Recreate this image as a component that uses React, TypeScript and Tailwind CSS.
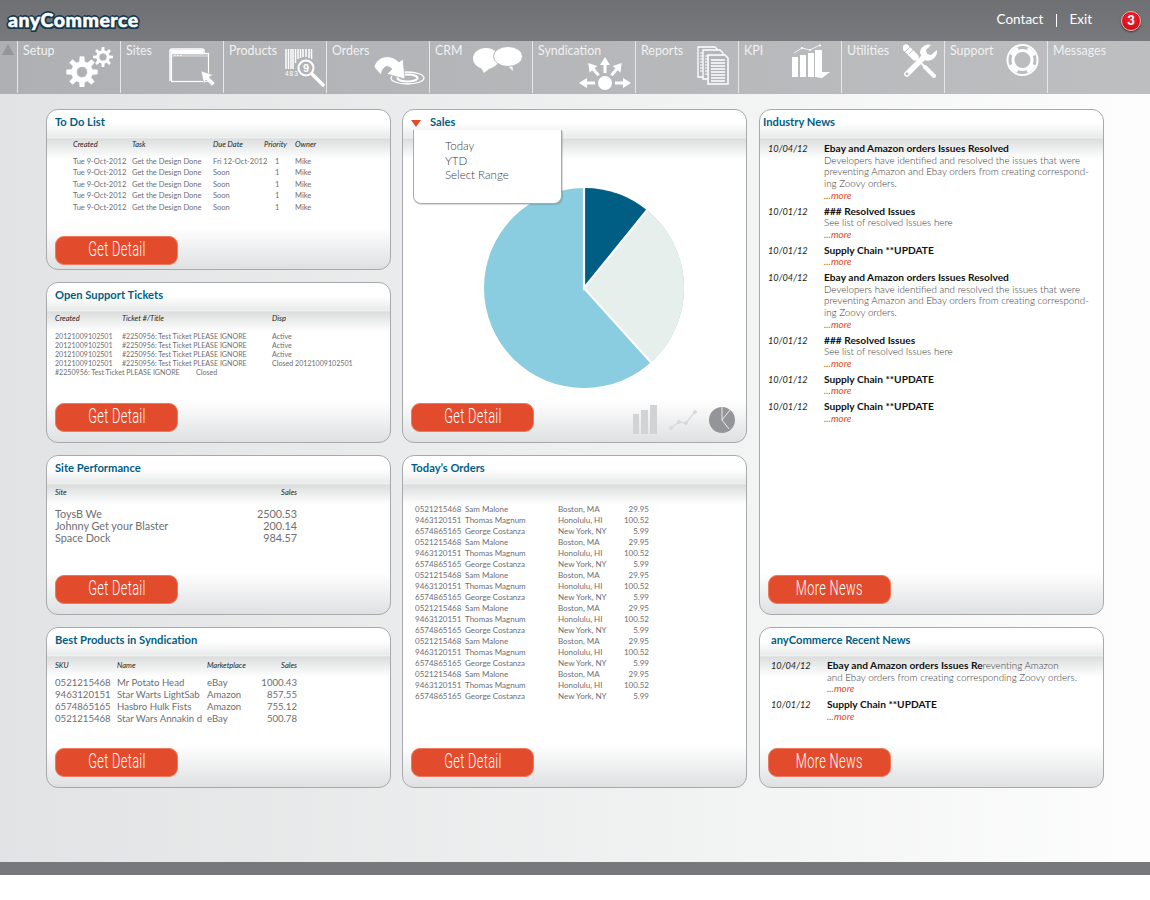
import React from "react";

const todo = Array.from({ length: 5 }, (_, i) => i);
const orderBase = [
  ["0521215468", "Sam Malone", "Boston, MA", "29.95"],
  ["9463120151", "Thomas Magnum", "Honolulu, HI", "100.52"],
  ["6574865165", "George Costanza", "New York, NY", "5.99"],
];
const orders = Array.from({ length: 18 }, (_, i) => orderBase[i % 3]);
const products = [
  ["0521215468", "Mr Potato Head", "eBay", "1000.43"],
  ["9463120151", "Star Warts LightSab", "Amazon", "857.55"],
  ["6574865165", "Hasbro Hulk Fists", "Amazon", "755.12"],
  ["0521215468", "Star Wars Annakin d", "eBay", "500.78"],
];
const sites = [
  ["ToysB We", "2500.53"],
  ["Johnny Get your Blaster", "200.14"],
  ["Space Dock", "984.57"],
];
const longBody = [
  "Developers have identified and resolved the issues that were",
  "preventing Amazon and Ebay orders from creating correspond-",
  "ing Zoovy orders.",
];
const news = [
  { date: "10/04/12", title: "Ebay and Amazon orders Issues Resolved", body: longBody },
  { date: "10/01/12", title: "### Resolved Issues", body: ["See list of resolved Issues here"] },
  { date: "10/01/12", title: "Supply Chain **UPDATE", body: [] },
  { date: "10/04/12", title: "Ebay and Amazon orders Issues Resolved", body: longBody },
  { date: "10/01/12", title: "### Resolved Issues", body: ["See list of resolved Issues here"] },
  { date: "10/01/12", title: "Supply Chain **UPDATE", body: [] },
  { date: "10/01/12", title: "Supply Chain **UPDATE", body: [] },
];

function gearPath(cx: number, cy: number, outer: number, inner: number, hole: number, teeth: number) {
  let d = "";
  const step = (Math.PI * 2) / teeth;
  for (let i = 0; i < teeth; i++) {
    const a = i * step - Math.PI / 2;
    const pts = [
      [inner, a - step * 0.3],
      [outer, a - step * 0.17],
      [outer, a + step * 0.17],
      [inner, a + step * 0.3],
    ];
    pts.forEach(([r, t], j) => {
      d += `${i === 0 && j === 0 ? "M" : "L"}${(cx + r * Math.cos(t)).toFixed(2)} ${(cy + r * Math.sin(t)).toFixed(2)}`;
    });
  }
  d += `Z M${cx + hole} ${cy} A${hole} ${hole} 0 1 0 ${cx - hole} ${cy} A${hole} ${hole} 0 1 0 ${cx + hole} ${cy}Z`;
  return d;
}

const SetupIcon = () => (
  <svg width="48" height="40" viewBox="0 0 48 40" fill="#fff" className="mt-[6px] mr-[7px] shrink-0">
    <path fillRule="evenodd" d={gearPath(17, 25, 15.5, 10.5, 5.5, 8)} stroke="#fff" strokeWidth="0.6" strokeLinejoin="round" />
    <path fillRule="evenodd" d={gearPath(38, 10, 10, 6.8, 3.6, 8)} />
  </svg>
);

const SitesIcon = () => (
  <svg width="46" height="38" viewBox="0 0 46 38" fill="none" className="mt-[7px] mr-[8px] shrink-0">
    <path d="M1 33V3a2 2 0 0 1 2-2h30a2 2 0 0 1 2 2v3" stroke="#fff" strokeWidth="1.5" />
    <path d="M2 2h32v3H2z" fill="#fff" />
    <rect x="2.5" y="5.5" width="37" height="28" stroke="#fff" strokeWidth="1.2" fill="#b1b3b6" />
    <path d="M3 6h36v3H3z" fill="#c9cbcd" />
    <path d="M5 7.500h1.500M8 7.500h1.500M11 7.500h1.500" stroke="#fff" />
    <path d="M32 23l12 4-4 2 6 6-3 3-6-6-2 4z" fill="#fff" stroke="#b1b3b6" strokeWidth="0.6" />
  </svg>
);

const ProductsIcon = () => (
  <svg width="41" height="38" viewBox="0 0 41 38" fill="none" className="mt-[8px] shrink-0">
    <path d="M1 0v20M3.5 0v20M6 0v20M8 0v20M10.5 0v14M13 0v10M15.5 0v9M18 0v8M21 0v8M24 0v9M26.5 0v10" stroke="#fff" strokeWidth="1.5" />
    <text x="0" y="27" fill="#fff" fontSize="6.5" fontFamily="Liberation Sans, sans-serif" letterSpacing="1">483</text>
    <circle cx="21" cy="19" r="7.5" stroke="#fff" strokeWidth="2" fill="#b1b3b6" />
    <text x="21" y="23" fill="#fff" fontSize="11" fontWeight="700" textAnchor="middle" fontFamily="Liberation Sans, sans-serif">9</text>
    <path d="M27 25l11 11" stroke="#fff" strokeWidth="3.5" strokeLinecap="round" />
  </svg>
);

const OrdersIcon = () => (
  <svg width="51" height="32" viewBox="0 0 51 32" fill="none" className="mt-[13px] mr-[4px] shrink-0">
    <ellipse cx="33.5" cy="24" rx="16.5" ry="6" stroke="#fff" strokeWidth="1.3" />
    <ellipse cx="33.5" cy="24" rx="10" ry="3.5" stroke="#fff" strokeWidth="2.2" />
    <path d="M0 13C3 2 16-1 25 8l4-3 2 20-18-5 5-5C14 11 9 11 7 21z" fill="#fff" stroke="#b3b5b8" strokeWidth="0.8" />
  </svg>
);

const CrmIcon = () => (
  <svg width="50" height="27" viewBox="0 0 50 27" className="mt-[5px] mr-[9px] shrink-0">
    <path d="M7 20l4 7 5-4z" fill="#fff" />
    <ellipse cx="13" cy="12.5" rx="13" ry="10.5" fill="#fff" />
    <path d="M33 18l7 7-1-8z" fill="#fff" />
    <ellipse cx="35" cy="10.5" rx="14.5" ry="10" fill="#fff" stroke="#b3b5b8" strokeWidth="1" />
  </svg>
);

// sits partly under the label, the reference lets it run below the word
const SyndicationIcon = () => (
  <svg width="52" height="34" viewBox="0 0 52 34" fill="#fff" className="mt-[16px] mr-[4px] -ml-[40px] shrink-0">
    <circle cx="26" cy="26" r="7" />
    {[-90, -40, 0, 40, 90].map((a) => (
      <path key={a} d="M-1.500-10h3v-8h3.500L0-26l-5 8h3.500z" transform={`translate(26 26) rotate(${a})`} />
    ))}
  </svg>
);

const ReportsIcon = () => (
  <svg width="32" height="39" viewBox="0 0 32 39" fill="#b3b5b8" stroke="#fff" className="mt-[5px] mr-[9px] shrink-0">
    <path d="M1 1h17l3 3v27H1z" strokeWidth="1.3" />
    <path d="M6 4h17l3 3v26H6z" strokeWidth="1.3" />
    <path d="M11 9h17l3 3v26H11z" strokeWidth="1.5" />
    <path d="M14 14h14M14 17h14M14 20h14M14 23h14M14 26h14M14 29h14M14 32h14M14 35h14" strokeWidth="1.4" />
    <path d="M3 7h3M3 10h3M3 13h3M3 16h3M3 19h3M3 22h3M3 25h3M8 10h3M8 13h3M8 16h3M8 19h3M8 22h3M8 25h3M8 28h3" strokeWidth="1" />
  </svg>
);

const KpiIcon = () => (
  <svg width="38" height="35" viewBox="0 0 38 35" fill="#fff" className="mt-[3px] mr-[11px] shrink-0">
    <path d="M0 13h6v20H0zM8 11h6v22H8zM16 9h6v24h-6zM23 6h7v22h8l-8 6-7-1z" />
    <path d="M2 9l8-5 8 2 10-5" fill="none" stroke="#fff" strokeWidth="0.8" />
    <circle cx="10" cy="4" r="1.1" />
    <circle cx="18" cy="6" r="1.1" />
    <circle cx="28" cy="1.5" r="1.1" />
  </svg>
);

const UtilitiesIcon = () => (
  <svg width="35" height="34" viewBox="0 0 35 34" fill="none" className="mt-[3px] mr-[6px] shrink-0">
    <path d="M3 4l9 9" stroke="#fff" strokeWidth="7" strokeLinecap="round" />
    <path d="M2 8l6-6M6 10l6-6" stroke="#b7b9bb" strokeWidth="0.8" />
    <path d="M12 13l10 10" stroke="#fff" strokeWidth="2" />
    <path d="M22 23l9 9" stroke="#fff" strokeWidth="4" strokeLinecap="round" />
    <path d="M4 30L22 12" stroke="#fff" strokeWidth="5.5" strokeLinecap="round" />
    <path d="M17 9c0-6 6-10 11-8l-5 5 1 4 4 1 6-5c1 6-5 13-13 10z" fill="#fff" />
    <circle cx="4" cy="30" r="1.4" fill="#b7b9bb" />
  </svg>
);

const SupportIcon = () => (
  <svg width="33" height="32" viewBox="0 0 33 32" fill="none" className="mt-[3px] mr-[8px] shrink-0">
    <circle cx="16.5" cy="16" r="15" stroke="#fff" strokeWidth="2" />
    <circle cx="16.5" cy="16" r="9.5" stroke="#fff" strokeWidth="3" />
    <circle cx="16.5" cy="16" r="11.5" stroke="#fff" strokeWidth="5" strokeDasharray="9 9.07" strokeDashoffset="-4.5" />
  </svg>
);

const navItems: { label: string; icon?: React.ReactNode }[] = [
  { label: "Setup", icon: <SetupIcon /> },
  { label: "Sites", icon: <SitesIcon /> },
  { label: "Products", icon: <ProductsIcon /> },
  { label: "Orders", icon: <OrdersIcon /> },
  { label: "CRM", icon: <CrmIcon /> },
  { label: "Syndication", icon: <SyndicationIcon /> },
  { label: "Reports", icon: <ReportsIcon /> },
  { label: "KPI", icon: <KpiIcon /> },
  { label: "Utilities", icon: <UtilitiesIcon /> },
  { label: "Support", icon: <SupportIcon /> },
  { label: "Messages" },
];

function ActionButton({ label, className }: { label: string; className: string }) {
  return (
    <button className={`w-[123px] h-[29px] rounded-[9px] ml-[8px] shrink-0 bg-[#e24b2b] border border-[#ec7a5f] text-white flex items-center justify-center overflow-hidden ${className}`}>
      <span className="[font-family:Roboto,sans-serif] font-light text-[20px] leading-none -mt-[3px] scale-x-[0.64] whitespace-nowrap tracking-[0.5px]">{label}</span>
    </button>
  );
}

function Card({ title, titleClass = "pl-[8px]", className = "", children }: { title: React.ReactNode; titleClass?: string; className?: string; children: React.ReactNode }) {
  return (
    <section className={`opacity-[0.999] rounded-[12px] border border-[#a7a9ac] flex flex-col bg-[linear-gradient(to_bottom,#fff_13px,#e9eaea_27px,#f6f6f6_27px,#dcdede_29px,#fff_49px,#fff_calc(100%-42px),#dfe0e2_100%)] ${className}`}>
      <h2 className={`h-[27px] pt-[5px] text-[11.2px] leading-[14px] font-bold text-[#005e85] shrink-0 ${titleClass}`}>{title}</h2>
      {children}
    </section>
  );
}

function NewsItem({ date, title, body }: { date: string; title: React.ReactNode; body: string[] }) {
  return (
    <div className="flex leading-[11.7px] mb-[4px]">
      <div className="italic text-[9.2px] text-[#231f20] shrink-0 w-[56px]">{date}</div>
      <div className="font-light text-[9.8px] text-[#38393b] whitespace-nowrap">
        <div className="font-bold text-[10.2px] text-[#111]">{title}</div>
        {body.map((line, i) => (
          <div key={i}>{line}</div>
        ))}
        <div className="italic font-normal text-[#e24b2b]">...more</div>
      </div>
    </div>
  );
}

export default function App() {
  return (
    <div className="[font-family:Lato,'Open_Sans',sans-serif] w-[1150px] bg-white">
      {/* top bar */}
      <header className="h-[41px] bg-[linear-gradient(to_bottom,#6f7073,#78797c)] flex items-center text-white">
        <span className="ml-[8px] -mt-[2px] font-black text-[19.5px] tracking-[0.5px] text-white [-webkit-text-stroke:0.5px_#fff] [text-shadow:2px_0_#17384a,-2px_0_#17384a,0_2px_#17384a,0_-2px_#17384a,1.5px_1.5px_#17384a,-1.5px_1.5px_#17384a,1.5px_-1.5px_#17384a,-1.5px_-1.5px_#17384a]">anyCommerce</span>
        <a className="ml-auto -mt-[1px] text-[13.5px] leading-none">Contact</a>
        <span className="w-px h-[13px] -mt-[1px] bg-white ml-[13px] mr-[12px]" />
        <a className="-mt-[1px] text-[13.5px] leading-none">Exit</a>
        <span className="ml-[29px] mr-[9px] w-[20px] h-[20px] rounded-full bg-[radial-gradient(circle_at_50%_35%,#f5202c,#c40a14)] border border-[#f3b4b4] shadow-[0_1px_2px_rgba(0,0,0,0.6)] flex items-center justify-center text-[13px] font-black leading-none">3</span>
      </header>

      {/* nav */}
      <nav className="h-[53px] flex bg-[linear-gradient(to_right,#aeb0b3,#bcbec0)]">
        <div className="w-[17px] shrink-0 pt-[3px] pl-[2px]">
          <div className="w-0 h-0 border-x-[6.5px] border-x-transparent border-b-[11px] border-b-[#939598]" />
        </div>
        {navItems.map((item) => (
          <div key={item.label} className="w-[103px] shrink-0 border-l border-[#e6e7e8] flex justify-between pl-[5px] h-[52px]">
            <span className="opacity-[0.999] text-[12.4px] text-[#f1f2f2] leading-none pt-[4px] whitespace-nowrap">{item.label}</span>
            {item.icon}
          </div>
        ))}
      </nav>

      {/* dashboard */}
      <main className="h-[768px] pt-[15px] pl-[46px] bg-[linear-gradient(to_right,#e1e3e4,#f1f2f2_60%,#fdfdfd)]">
        <div className="grid grid-cols-[345px_345px_346px] grid-rows-[161px_161px_160px_161px] gap-y-[12px] gap-x-[11px]">
          <Card title="To Do List">
            <div className="text-[7.5px] leading-[11.5px] flex-1 pl-[26px] text-[#6d6e71]">
              <div className="grid grid-cols-[59px_81px_51px_31px_1fr] italic text-[#231f20] mt-[2px] mb-[5px]">
                <span>Created</span>
                <span>Task</span>
                <span>Due Date</span>
                <span>Priority</span>
                <span>Owner</span>
              </div>
              {todo.map((i) => (
                <div key={i} className="grid grid-cols-[59px_81px_51px_31px_1fr]">
                  <span>Tue 9-Oct-2012</span>
                  <span>Get the Design Done</span>
                  <span className="whitespace-nowrap">{i === 0 ? "Fri 12-Oct-2012" : "Soon"}</span>
                  <span className="pl-[11px]">1</span>
                  <span>Mike</span>
                </div>
              ))}
            </div>
            <ActionButton label="Get Detail" className="mb-[4px]" />
          </Card>

          <Card title={<span className="flex items-center"><span className="w-0 h-0 mr-[9px] border-x-[5.5px] border-x-transparent border-t-[7px] border-t-[#e24b2b] mt-[3px]" />Sales</span>} className="row-span-2 relative">
            {/* range dropdown sits over the card */}
            <div className="absolute left-[10px] top-[20px] w-[149px] h-[74px] bg-white border border-t-0 border-[#a7a9ac] rounded-b-[8px] pl-[31px] pt-[9px] text-[11.5px] leading-[14.6px] font-light text-[#38393b] shadow-[1px_1px_1px_rgba(0,0,0,0.15)]">
              <div>Today</div>
              <div>YTD</div>
              <div>Select Range</div>
            </div>
            <div className="flex-1 pl-[80px] pt-[50px]">
              <svg width="202" height="202" viewBox="-101 -101 202 202">
                <circle r="100" fill="#8acde0" />
                <path d="M0 0V-100A100 100 0 0 1 63 -77.7Z" fill="#005e85" />
                <path d="M0 0L63 -77.7A100 100 0 0 1 66.9 74.3Z" fill="#e6efec" />
                <path d="M0 -100V0L63 -77.7M0 0L66.9 74.3" fill="none" stroke="#fff" strokeWidth="2.2" />
              </svg>
            </div>
            <div className="flex items-end justify-between pr-[11px] mb-[10px] shrink-0">
              <ActionButton label="Get Detail" className="" />
              <div className="flex items-center gap-[11.5px] -mb-[2px]">
                <svg width="24" height="29" viewBox="0 0 24 29" fill="#d1d3d4">
                  <path d="M0 9h6v20H0zM8 5h7v24H8zM17 0h7v29h-7z" />
                </svg>
                <svg width="29" height="20" viewBox="0 0 29 20" fill="#d8dadb" stroke="#d8dadb">
                  <path d="M2 18l8-6 7 1 9-11M26 2" fill="none" strokeWidth="1.2" />
                  <circle cx="2" cy="18" r="1.5" />
                  <circle cx="10" cy="12" r="1.5" />
                  <circle cx="17" cy="13" r="1.5" />
                  <circle cx="26" cy="2" r="1.5" />
                </svg>
                <svg width="26" height="26" viewBox="0 0 26 26">
                  <circle cx="13" cy="13" r="13" fill="#939598" />
                  <path d="M13 0v13l7 9M13 13l8-10" fill="none" stroke="#fff" strokeWidth="0.8" />
                </svg>
              </div>
            </div>
          </Card>

          <Card title="Industry News" titleClass="pl-[3px]" className="row-span-3 ml-px">
            <div className="flex-1 pl-[8px] pt-[6px]">
              {news.map((n, i) => (
                <NewsItem key={i} {...n} />
              ))}
            </div>
            <ActionButton label="More News" className="mb-[10px]" />
          </Card>

          <Card title="Open Support Tickets">
            <div className="text-[7.1px] leading-[9px] flex-1 pl-[8px] text-[#6d6e71]">
              <div className="grid grid-cols-[67px_150px_1fr] italic text-[7.5px] text-[#231f20] mt-[4px] mb-[9px]">
                <span>Created</span>
                <span>Ticket #/Title</span>
                <span>Disp</span>
              </div>
              {["Active", "Active", "Active", "Closed 20121009102501"].map((d, i) => (
                <div key={i} className="grid grid-cols-[67px_150px_1fr]">
                  <span>20121009102501</span>
                  <span>#2250956: Test Ticket PLEASE IGNORE</span>
                  <span>{d}</span>
                </div>
              ))}
              <div className="grid grid-cols-[141px_1fr]">
                <span>#2250956: Test Ticket PLEASE IGNORE</span>
                <span>Closed</span>
              </div>
            </div>
            <ActionButton label="Get Detail" className="mb-[10px]" />
          </Card>

          <Card title="Site Performance">
            <div className="flex-1 pl-[8px] w-[250px]">
              <div className="flex justify-between text-[7.5px] leading-[10px] italic text-[#231f20] mt-[5px] mb-[10px]">
                <span>Site</span>
                <span>Sales</span>
              </div>
              {sites.map(([name, sales]) => (
                <div key={name} className="flex justify-between text-[10.8px] leading-[12px] text-[#6d6e71]">
                  <span>{name}</span>
                  <span>{sales}</span>
                </div>
              ))}
            </div>
            <ActionButton label="Get Detail" className="mb-[10px]" />
          </Card>

          <Card title="Today’s Orders" className="row-span-2">
            <div className="flex-1 pl-[12px] w-[246px] pt-[21px] text-[8px] leading-[11px] text-[#6d6e71]">
              {orders.map((o, i) => (
                <div key={i} className="grid grid-cols-[50px_93px_1fr_auto]">
                  <span>{o[0]}</span>
                  <span>{o[1]}</span>
                  <span>{o[2]}</span>
                  <span>{o[3]}</span>
                </div>
              ))}
            </div>
            <ActionButton label="Get Detail" className="mb-[10px]" />
          </Card>

          <Card title="Best Products in Syndication">
            <div className="flex-1 pl-[8px] w-[250px]">
              <div className="grid grid-cols-[62px_90px_1fr_auto] text-[7.5px] leading-[10px] italic text-[#231f20] mt-[6px] mb-[6px]">
                <span>SKU</span>
                <span>Name</span>
                <span>Marketplace</span>
                <span>Sales</span>
              </div>
              {products.map((p, i) => (
                <div key={i} className="grid grid-cols-[62px_90px_1fr_auto] text-[9.6px] leading-[12px] text-[#6d6e71]">
                  <span>{p[0]}</span>
                  <span className="whitespace-nowrap">{p[1]}</span>
                  <span>{p[2]}</span>
                  <span>{p[3]}</span>
                </div>
              ))}
            </div>
            <ActionButton label="Get Detail" className="mb-[10px]" />
          </Card>

          <Card title="anyCommerce Recent News" titleClass="pl-[11px]" className="ml-px">
            <div className="flex-1 pl-[11px] pt-[5px]">
              <NewsItem
                date="10/04/12"
                title={<span>Ebay and Amazon orders Issues Re<span className="font-light text-[9.8px] text-[#38393b]">reventing Amazon</span></span>}
                body={["and Ebay orders from creating corresponding Zoovy orders."]}
              />
              <NewsItem date="10/01/12" title="Supply Chain **UPDATE" body={[]} />
            </div>
            <ActionButton label="More News" className="mb-[10px]" />
          </Card>
        </div>
      </main>

      <footer className="h-[13px] bg-[#77787b]" />
      <div className="h-[25px] bg-white" />
    </div>
  );
}
